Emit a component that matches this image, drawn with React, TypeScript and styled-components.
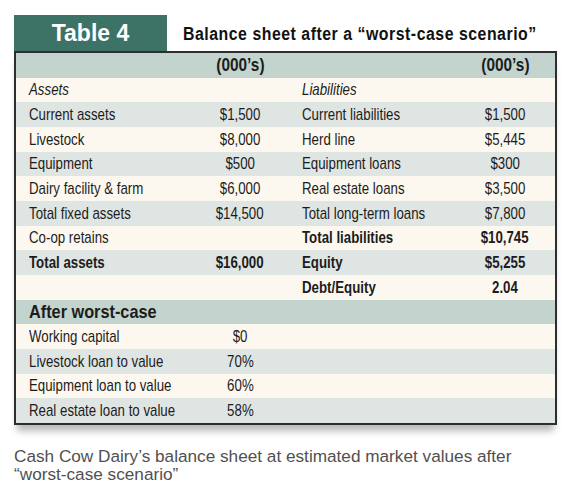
import React from 'react';
import styled, { createGlobalStyle } from 'styled-components';

const GlobalStyle = createGlobalStyle`
    html, body {
        margin: 0;
        padding: 0;
        background: #ffffff;
    }
`;

const Page = styled.div`
    width: 575px;
    height: 496px;
    padding: 15px 0 0 14px;
    box-sizing: border-box;
    font-family: 'Liberation Sans', Arial, sans-serif;
    color: #1c1c1c;
`;

const TitleBar = styled.div`
    display: flex;
    align-items: stretch;
    height: 36px;
`;

const Tab = styled.div`
    flex: 0 0 153px;
    background: #3d7366;
    color: #ffffff;
    font-weight: bold;
    font-size: 23px;
    display: flex;
    align-items: center;
    justify-content: center;
    padding-top: 1px;
    box-sizing: border-box;
`;

const Title = styled.div`
    padding-left: 16px;
    display: flex;
    align-items: center;
    padding-top: 3px;
    min-width: 0;
`;

/* narrow face is not installed, so squeeze the regular one */
const Narrow = styled.span<{ $origin?: string; $squeeze?: number }>`
    display: inline-block;
    transform: scaleX(${(p) => p.$squeeze ?? 0.81});
    transform-origin: ${(p) => p.$origin ?? 'left'} center;
    white-space: nowrap;
`;

const TitleText = styled(Narrow)`
    font-weight: bold;
    font-size: 18px;
    letter-spacing: 0.6px;
    color: #111;
`;

const Table = styled.div`
    width: 543px;
    box-sizing: border-box;
    border: 2px solid #2e2e2e;
    box-shadow: 0 9px 7px -3px rgba(0, 0, 0, 0.28);
    display: grid;
    grid-template-columns: 184px 80px 185px 80px 1fr;
`;

type Tone = 'head' | 'cream' | 'gray';

const tones: Record<Tone, string> = {
    head: '#c3d3cd',
    cream: '#fdf8ef',
    gray: '#dfe5e2',
};

const Row = styled.div<{ $tone: Tone }>`
    display: contents;

    & > div {
        background: ${(p) => tones[p.$tone]};
    }
`;

const Cell = styled.div<{ $bold?: boolean; $italic?: boolean; $center?: boolean; $indent?: number; $size?: number }>`
    height: 24.67px;
    display: flex;
    align-items: center;
    justify-content: ${(p) => (p.$center ? 'center' : 'flex-start')};
    padding-left: ${(p) => p.$indent ?? 0}px;
    font-size: ${(p) => p.$size ?? 16.4}px;
    font-weight: ${(p) => (p.$bold ? 'bold' : 'normal')};
    font-style: ${(p) => (p.$italic ? 'italic' : 'normal')};
    white-space: nowrap;
    overflow: visible;
`;

const Caption = styled.p`
    margin: 22px 0 0 0;
    font-size: 17.2px;
    line-height: 18px;
    color: #505050;
    width: 530px;
`;

type Line = {
    tone: Tone;
    l?: string;
    lv?: string;
    r?: string;
    rv?: string;
    lb?: boolean;
    rb?: boolean;
    italic?: boolean;
};

const lines: Line[] = [
    { tone: 'head', lv: '(000’s)', rv: '(000’s)', lb: true, rb: true },
    { tone: 'cream', l: 'Assets', r: 'Liabilities', italic: true },
    { tone: 'gray', l: 'Current assets', lv: '$1,500', r: 'Current liabilities', rv: '$1,500' },
    { tone: 'cream', l: 'Livestock', lv: '$8,000', r: 'Herd line', rv: '$5,445' },
    { tone: 'gray', l: 'Equipment', lv: '$500', r: 'Equipment loans', rv: '$300' },
    { tone: 'cream', l: 'Dairy facility & farm', lv: '$6,000', r: 'Real estate loans', rv: '$3,500' },
    { tone: 'gray', l: 'Total fixed assets', lv: '$14,500', r: 'Total long-term loans', rv: '$7,800' },
    { tone: 'cream', l: 'Co-op retains', r: 'Total liabilities', rv: '$10,745', rb: true },
    { tone: 'gray', l: 'Total assets', lv: '$16,000', r: 'Equity', rv: '$5,255', lb: true, rb: true },
    { tone: 'cream', r: 'Debt/Equity', rv: '2.04', rb: true },
    { tone: 'head', l: 'After worst-case', lb: true },
    { tone: 'cream', l: 'Working capital', lv: '$0' },
    { tone: 'gray', l: 'Livestock loan to value', lv: '70%' },
    { tone: 'cream', l: 'Equipment loan to value', lv: '60%' },
    { tone: 'gray', l: 'Real estate loan to value', lv: '58%' },
];

export default function App() {
    return (
        <Page>
            <GlobalStyle />
            <TitleBar>
                <Tab>Table 4</Tab>
                <Title>
                    <TitleText $squeeze={0.88}>Balance sheet after a “worst-case scenario”</TitleText>
                </Title>
            </TitleBar>
            <Table>
                {lines.map((line, i) => {
                    const head = line.tone === 'head';
                    const size = head ? 17.5 : undefined;
                    const squeeze = head ? 0.88 : undefined;
                    return (
                        <Row key={i} $tone={line.tone}>
                            <Cell $indent={13} $bold={line.lb} $italic={line.italic} $size={head ? 18.5 : undefined}>
                                {line.l && <Narrow $squeeze={squeeze}>{line.l}</Narrow>}
                            </Cell>
                            <Cell $center $bold={line.lb} $size={size}>
                                {line.lv && (
                                    <Narrow $origin="center" $squeeze={squeeze}>
                                        {line.lv}
                                    </Narrow>
                                )}
                            </Cell>
                            <Cell $indent={22} $bold={line.rb} $italic={line.italic}>
                                {line.r && <Narrow>{line.r}</Narrow>}
                            </Cell>
                            <Cell $center $bold={line.rb} $size={size}>
                                {line.rv && (
                                    <Narrow $origin="center" $squeeze={squeeze}>
                                        {line.rv}
                                    </Narrow>
                                )}
                            </Cell>
                            <Cell />
                        </Row>
                    );
                })}
            </Table>
            <Caption>
                Cash Cow Dairy’s balance sheet at estimated market values after “worst-case scenario”
            </Caption>
        </Page>
    );
}
